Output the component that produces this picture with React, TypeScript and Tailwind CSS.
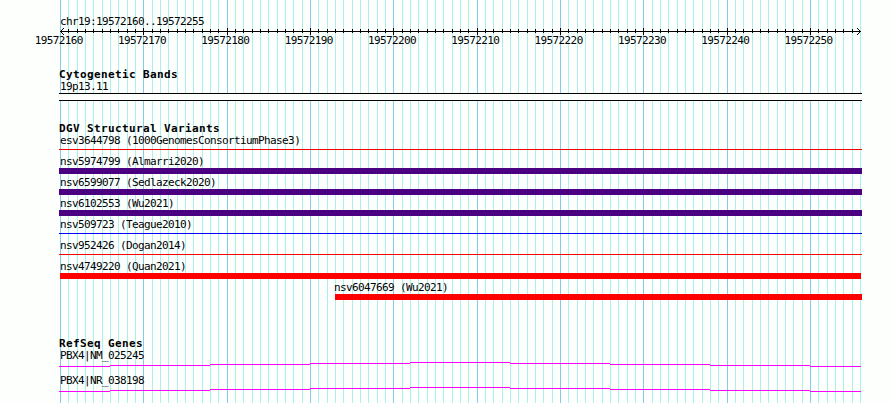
// src/App.tsx
const START = 19572160;
const BASES = 96;
const BASE_WIDTH = 800 / BASES;
const LEFT = 60;

const positions = Array.from({ length: BASES + 1 }, (_, i) => ({
  x: Math.round(LEFT + i * BASE_WIDTH),
  major: i % 10 === 0,
}));

const majorLabels = Array.from({ length: 10 }, (_, i) => START + i * 10);

const variants = [
  { id: 'esv3644798', study: '1000GenomesConsortiumPhase3', bar: 'mt-[3px] mb-[3px] h-px w-[803px] bg-[#f00000]' },
  { id: 'nsv5974799', study: 'Almarri2020', bar: 'mt-px h-1.5 w-[803px] bg-[#4b0082]' },
  { id: 'nsv6599077', study: 'Sedlazeck2020', bar: 'mt-px h-1.5 w-[803px] bg-[#4b0082]' },
  { id: 'nsv6102553', study: 'Wu2021', bar: 'mt-px h-1.5 w-[803px] bg-[#4b0082]' },
  { id: 'nsv509723', study: 'Teague2010', bar: 'mt-[3px] mb-[3px] h-px w-[803px] bg-[#0000ff]' },
  { id: 'nsv952426', study: 'Dogan2014', bar: 'mt-[3px] mb-[3px] h-px w-[803px] bg-[#ff0000]' },
  { id: 'nsv4749220', study: 'Quan2021', bar: 'mt-px ml-px h-1.5 w-[801px] bg-[#ff0000]' },
  { id: 'nsv6047669', study: 'Wu2021', indent: 'ml-[274px]', bar: 'mt-px ml-0.5 h-1.5 w-[527px] bg-[#ff0000]' },
];

export default function App() {
  return (
    <div className="relative h-[403px] w-[890px] overflow-hidden bg-[#fdfffc] font-['DejaVu_Sans_Mono',monospace] text-[11px] leading-3 tracking-[-0.62px] whitespace-nowrap text-black">
      <GridLines />
      <div className="relative flex flex-col pt-[15px]">
        <div className="h-3 pt-px pl-[60px]">chr19:19572160..19572255</div>
        <Ruler />
        <div className="ml-[17px] flex h-3">
          {majorLabels.map((label) => (
            <span key={label} className="w-[83.33px] shrink-0 text-center">{label}</span>
          ))}
        </div>

        <section className="mt-[21px] pl-[59px]">
          <TrackTitle>Cytogenetic Bands</TrackTitle>
          <div className="h-3 pt-px pl-px">19p13.11</div>
          <div className="mt-px h-2 w-[803px] border-y border-black bg-[#fdfffc]" />
        </section>

        <section className="mt-[21px] pl-[59px]">
          <TrackTitle>DGV Structural Variants</TrackTitle>
          {variants.map((v) => (
            <div key={v.id} className={`flex h-[21px] flex-col ${v.indent ?? ''}`}>
              <div className="h-3 shrink-0 pt-px pl-px">{v.id} ({v.study})</div>
              <div className={`shrink-0 ${v.bar}`} />
            </div>
          ))}
        </section>

        <section className="mt-[35px] pl-[59px]">
          <TrackTitle>RefSeq Genes</TrackTitle>
          <Gene name="PBX4|NM_025245" />
          <Gene name="PBX4|NR_038198" />
        </section>
      </div>
    </div>
  );
}

function TrackTitle({ children }: { children: string }) {
  return <h2 className="h-3 pt-px text-[11px] font-bold tracking-[0.38px]">{children}</h2>;
}

function GridLines() {
  return (
    <svg className="absolute inset-0" width="890" height="403" shapeRendering="crispEdges">
      {positions.map(({ x, major }) => (
        <rect key={x} x={x} y="0" width="1" height="403" fill={major ? '#84caf0' : '#afeeee'} />
      ))}
    </svg>
  );
}

function Ruler() {
  return (
    <svg className="block shrink-0" width="890" height="8" shapeRendering="crispEdges">
      <rect x="60" y="4" width="801" height="1" />
      {positions.slice(1, -1).map(({ x, major }) => (
        <rect key={x} x={x} y={major ? 1 : 2} width="1" height={major ? 7 : 4} />
      ))}
      <path d="M61 3h1v1h-1zM62 2h1v1h-1zM63 1h1v1h-1zM61 5h1v1h-1zM62 6h1v1h-1zM63 7h1v1h-1z" />
      <path d="M859 3h1v1h-1zM858 2h1v1h-1zM857 1h1v1h-1zM859 5h1v1h-1zM858 6h1v1h-1zM857 7h1v1h-1z" />
    </svg>
  );
}

// introns are drawn as a shallow stepped arch
function Gene({ name }: { name: string }) {
  return (
    <div className="h-[25px]">
      <div className="h-3 pt-px pl-px">{name}</div>
      <svg className="block" width="802" height="7" shapeRendering="crispEdges">
        <path
          d="M0 5.5h51M51 4.5h100M151 3.5h100M251 2.5h100M351 1.5h100M451 2.5h100M551 3.5h100M651 4.5h100M751 5.5h51"
          stroke="#ff00ff"
          fill="none"
        />
      </svg>
    </div>
  );
}
